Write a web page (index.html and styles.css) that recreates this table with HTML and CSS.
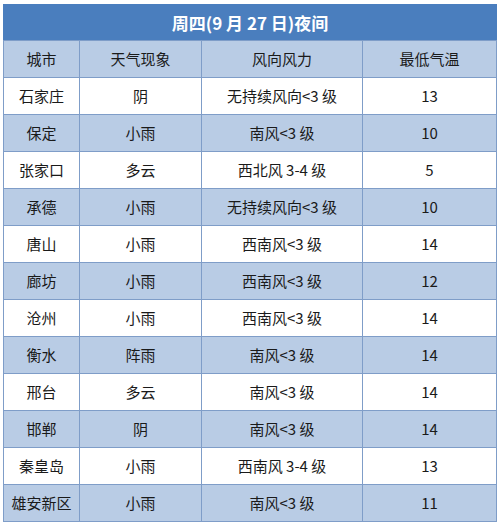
FILE: index.html
```html
<!DOCTYPE html>
<html lang="zh">
<head>
<meta charset="utf-8">
<link rel="stylesheet" href="styles.css">
</head>
<body>
<div class="wrap">
<table class="wx">
<colgroup><col class="c1"><col class="c2"><col class="c3"><col class="c4"></colgroup>
<tr class="title"><th colspan="4">周四(9 月 27 日)夜间</th></tr>
<tr class="head"><td>城市</td><td>天气现象</td><td>风向风力</td><td>最低气温</td></tr>
<tr><td>石家庄</td><td>阴</td><td>无持续风向&lt;3 级</td><td>13</td></tr>
<tr class="alt"><td>保定</td><td>小雨</td><td>南风&lt;3 级</td><td>10</td></tr>
<tr><td>张家口</td><td>多云</td><td>西北风 3-4 级</td><td>5</td></tr>
<tr class="alt"><td>承德</td><td>小雨</td><td>无持续风向&lt;3 级</td><td>10</td></tr>
<tr><td>唐山</td><td>小雨</td><td>西南风&lt;3 级</td><td>14</td></tr>
<tr class="alt"><td>廊坊</td><td>小雨</td><td>西南风&lt;3 级</td><td>12</td></tr>
<tr><td>沧州</td><td>小雨</td><td>西南风&lt;3 级</td><td>14</td></tr>
<tr class="alt"><td>衡水</td><td>阵雨</td><td>南风&lt;3 级</td><td>14</td></tr>
<tr><td>邢台</td><td>多云</td><td>南风&lt;3 级</td><td>14</td></tr>
<tr class="alt"><td>邯郸</td><td>阴</td><td>南风&lt;3 级</td><td>14</td></tr>
<tr><td>秦皇岛</td><td>小雨</td><td>西南风 3-4 级</td><td>13</td></tr>
<tr class="alt"><td>雄安新区</td><td>小雨</td><td>南风&lt;3 级</td><td>11</td></tr>
</table>
</div>
</body>
</html>
```
FILE: styles.css
```css
html, body {
  margin: 0;
  padding: 0;
  background: #ffffff;
}
.wrap {
  padding: 4px 0 0 3px;
}
.wx {
  width: 493px;
  border-collapse: collapse;
  table-layout: fixed;
  font-family: "Noto Sans CJK SC", "Microsoft YaHei", sans-serif;
  font-size: 15px;
  color: #1a1a1a;
  border: 1px solid #7393c2;
}
.c1 { width: 76px; }
.c2 { width: 122px; }
.c3 { width: 161px; }
.c4 { width: 134px; }
.wx td, .wx th {
  border: 1px solid #7f9dc8;
  text-align: center;
  padding: 0;
  height: 36px;
  line-height: 20px;
}
.title th {
  background: #4a7ebe;
  color: #ffffff;
  font-size: 17px;
  font-weight: bold;
  height: 35px;
  border-color: #4a7ebe #4a7ebe #7f9dc8 #4a7ebe;
}
.head td, .alt td {
  background: #b9cce5;
}
```
